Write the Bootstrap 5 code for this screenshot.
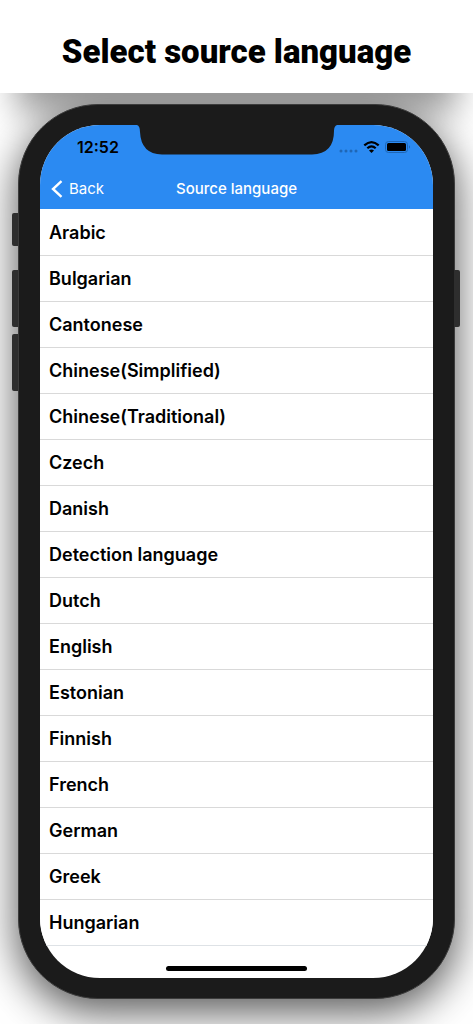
<!DOCTYPE html>
<html lang="en">
<head>
<meta charset="utf-8">
<meta name="viewport" content="width=device-width, initial-scale=1">
<title>Source language</title>
<link href="https://cdn.jsdelivr.net/npm/bootstrap@5.3.0/dist/css/bootstrap.min.css" rel="stylesheet">
<style>
  body { font-family: Inter, "Liberation Sans", sans-serif; color: #000; background: #fff; }
  .promo { height: 93px; padding-top: 10px; box-shadow: 0 34px 34px -16px rgba(0,0,0,.4); }
  .promo h1 { font-family: Roboto, "Liberation Sans", sans-serif; font-size: 33px; line-height: 44px; font-weight: 900; }
  .stage { padding: 11px 18px 25px; }
  .phone { padding: 20px 21px; border: 1px solid #3c3c3c; border-radius: 80px; background: #1b1b1b; box-shadow: 0 12px 40px 2px rgba(0,0,0,.64); }
  .side-key { position: absolute; width: 6px; background: #2e2e2e; border-radius: 2px 0 0 2px; left: -7px; }
  .key-mute { top: 108px; height: 33px; }
  .key-up { top: 165px; height: 57px; }
  .key-down { top: 229px; height: 57px; }
  .key-power { top: 165px; height: 57px; left: auto; right: -6px; border-radius: 0 2px 2px 0; }
  .screen { border-radius: 60px; background: #fff; }
  .top-area { background: #2b8af2; }
  .status { height: 44px; padding: 0 23px 0 37px; }
  .clock { font-size: 16px; font-weight: 600; line-height: 20px; }
  .notch { position: absolute; top: 0; left: 50%; width: 200px; margin-left: -100px; }
  .title-bar { height: 40px; color: #fff; }
  .title-bar h2 { font-size: 15px; font-weight: 500; line-height: 20px; }
  .back { color: #fff; font-size: 15px; line-height: 20px; font-weight: 400; position: absolute; left: 11px; gap: 6px; }
  .back:hover { color: #fff; }
  .languages { padding-top: 1px; }
  .languages .list-group-item { height: 46px; padding: 0 9px; border-color: #d9d9d9; border-width: 0 0 1px; color: #000; font-size: 18px; font-weight: 600; line-height: 24px; }
  .home { height: 32px; padding-bottom: 7px; }
  .home-bar { width: 141px; height: 5px; background: #000; }
</style>
</head>
<body>
<header class="promo d-flex justify-content-center align-items-center"><h1 class="m-0 text-nowrap">Select source language</h1></header>
<main class="stage overflow-hidden">
  <div class="phone position-relative">
    <span class="side-key key-mute"></span><span class="side-key key-up"></span><span class="side-key key-down"></span><span class="side-key key-power"></span>
    <div class="screen overflow-hidden position-relative">
      <div class="top-area">
        <div class="status d-flex align-items-center justify-content-between">
          <span class="clock">12:52</span>
          <svg width="71" height="14" viewBox="0 0 71 14" aria-hidden="true">
            <g fill="#1f66b5"><circle cx="2" cy="11" r="1.5"/><circle cx="7" cy="11" r="1.5"/><circle cx="12" cy="11" r="1.5"/><circle cx="17" cy="11" r="1.5"/></g>
            <g fill="none" stroke="#000" stroke-width="2.200"><path d="M25.300 5.400Q32.500 -1.200 39.700 5.400"/><path d="M28.300 8.300Q32.500 4.400 36.700 8.300"/></g>
            <path d="M30 10.500Q32.500 8.500 35 10.500L32.500 13Z"/>
            <rect x="46.500" y="1.500" width="22" height="11" rx="3" fill="none" stroke="#1f66b5"/><rect x="48" y="3" width="19" height="8" rx="1.500"/><path d="M70 5.300v3.400q2-1.700 0-3.400z" fill="#1f66b5"/>
          </svg>
        </div>
        <nav class="title-bar d-flex align-items-center justify-content-center position-relative" aria-label="Navigation">
          <button type="button" class="back btn border-0 p-0 d-flex align-items-center">
            <svg width="12" height="18" viewBox="0 0 12 18" fill="none" stroke="#fff" stroke-width="2.400" aria-hidden="true"><path d="M10.500 1.200 2 9l8.500 7.800"/></svg>
            <span>Back</span>
          </button>
          <h2 class="m-0">Source language</h2>
        </nav>
      </div>
      <svg class="notch" height="30" viewBox="0 0 200 30" fill="#1b1b1b" aria-hidden="true"><path d="M0 0H200Q197 1 197 6Q197 29 175 29.500H25Q4 29 3 7Q3 1 0 0Z"/></svg>
      <ul class="languages list-group list-group-flush">
        <li class="list-group-item d-flex align-items-center">Arabic</li>
        <li class="list-group-item d-flex align-items-center">Bulgarian</li>
        <li class="list-group-item d-flex align-items-center">Cantonese</li>
        <li class="list-group-item d-flex align-items-center">Chinese(Simplified)</li>
        <li class="list-group-item d-flex align-items-center">Chinese(Traditional)</li>
        <li class="list-group-item d-flex align-items-center">Czech</li>
        <li class="list-group-item d-flex align-items-center">Danish</li>
        <li class="list-group-item d-flex align-items-center">Detection language</li>
        <li class="list-group-item d-flex align-items-center">Dutch</li>
        <li class="list-group-item d-flex align-items-center">English</li>
        <li class="list-group-item d-flex align-items-center">Estonian</li>
        <li class="list-group-item d-flex align-items-center">Finnish</li>
        <li class="list-group-item d-flex align-items-center">French</li>
        <li class="list-group-item d-flex align-items-center">German</li>
        <li class="list-group-item d-flex align-items-center">Greek</li>
        <li class="list-group-item d-flex align-items-center border-bottom">Hungarian</li>
      </ul>
      <div class="home d-flex justify-content-center align-items-end"><div class="home-bar rounded-pill"></div></div>
    </div>
  </div>
</main>
<script src="https://cdn.jsdelivr.net/npm/bootstrap@5.3.0/dist/js/bootstrap.bundle.min.js"></script>
</body>
</html>
